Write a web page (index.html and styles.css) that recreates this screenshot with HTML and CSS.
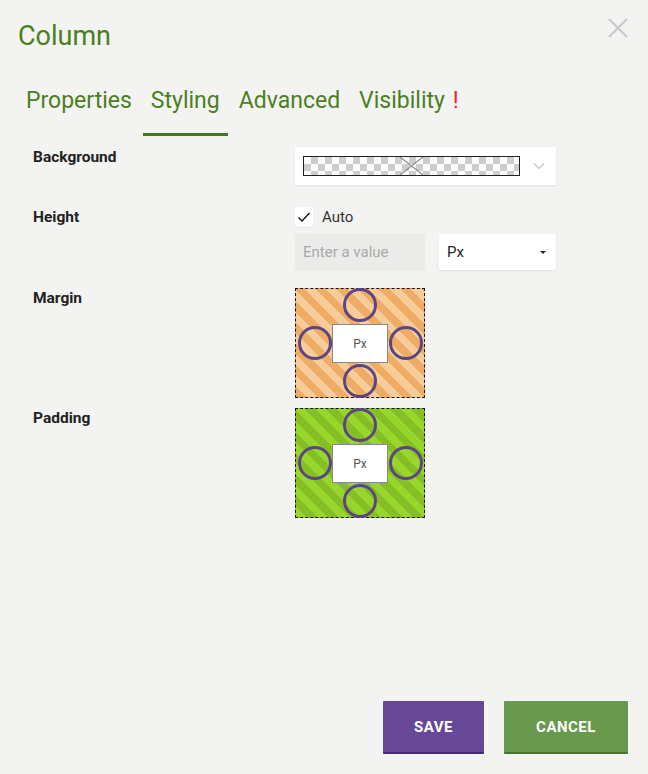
FILE: index.html
```html
<!DOCTYPE html>
<html>
<head>
<meta charset="utf-8">
<link rel="stylesheet" href="styles.css">
</head>
<body>
<div class="dialog">
  <div class="header">
    <h1 class="title">Column</h1>
    <button class="close" aria-label="Close">
      <svg width="20" height="20" viewBox="0 0 20 20"><path d="M1 1L19 19M19 1L1 19" stroke="#c9c9c9" stroke-width="2.2" fill="none"/></svg>
    </button>
  </div>
  <div class="tabs">
    <span class="tab">Properties</span>
    <span class="tab active">Styling</span>
    <span class="tab">Advanced</span>
    <span class="tab">Visibility <span class="warn">!</span></span>
  </div>
  <div class="content">
    <div class="row row-bg">
      <div class="label">Background</div>
      <div class="control">
        <div class="picker">
          <div class="checker">
            <svg width="23" height="18" viewBox="0 0 23 18"><path d="M0 0L23 18M23 0L0 18" stroke="#8f8f8f" stroke-width="1.3" fill="none"/></svg>
          </div>
          <svg class="chev" width="12" height="8" viewBox="0 0 12 8"><path d="M1 1.5L6 6.5L11 1.5" stroke="#c8c8c8" stroke-width="1.4" fill="none"/></svg>
        </div>
      </div>
    </div>
    <div class="row row-height">
      <div class="label">Height</div>
      <div class="control">
        <div class="check-line">
          <span class="checkbox">
            <svg width="14" height="12" viewBox="0 0 14 12"><path d="M1.5 6.5L5 10L12.5 2" stroke="#111" stroke-width="1.4" fill="none"/></svg>
          </span>
          <span class="check-text">Auto</span>
        </div>
        <div class="value-line">
          <input class="value" type="text" placeholder="Enter a value">
          <div class="unit"><span>Px</span><span class="caret"></span></div>
        </div>
      </div>
    </div>
    <div class="row row-margin">
      <div class="label">Margin</div>
      <div class="control">
        <div class="spacing margin">
          <span class="ring top"></span>
          <span class="ring left"></span>
          <span class="mid">Px</span>
          <span class="ring right"></span>
          <span class="ring bottom"></span>
        </div>
      </div>
    </div>
    <div class="row row-padding">
      <div class="label">Padding</div>
      <div class="control">
        <div class="spacing padding">
          <span class="ring top"></span>
          <span class="ring left"></span>
          <span class="mid">Px</span>
          <span class="ring right"></span>
          <span class="ring bottom"></span>
        </div>
      </div>
    </div>
  </div>
  <div class="footer">
    <button class="btn save">SAVE</button>
    <button class="btn cancel">CANCEL</button>
  </div>
</div>
</body>
</html>
```
FILE: styles.css
```css
* { box-sizing: border-box; }
html, body { margin: 0; padding: 0; }
body {
  background: #f3f4f2;
  font-family: Roboto, "Liberation Sans", sans-serif;
  color: #222;
}
.dialog {
  height: 774px;
  display: flex;
  flex-direction: column;
}
.header {
  display: flex;
  justify-content: space-between;
  align-items: flex-start;
  padding: 20px 20px 0 18px;
}
.title {
  margin: 0;
  font-weight: 400;
  font-size: 27px;
  line-height: 32px;
  color: #4b7f1f;
}
.close {
  border: 0;
  background: none;
  padding: 0;
  margin-top: -2px;
  width: 20px;
  height: 20px;
  display: block;
}
.close svg { display: block; }
.tabs {
  display: flex;
  gap: 3px;
  margin-top: 28px;
  padding-left: 18px;
}
.tab {
  font-size: 23px;
  line-height: 28px;
  padding: 7px 8px 18px;
  border-bottom: 3px solid transparent;
  color: #4b7f1f;
}
.tab.active { border-bottom-color: #437a15; }
.warn { color: #e8291f; margin-left: 2px; }
.content {
  padding: 11px 0 0 33px;
}
.row {
  display: flex;
}
.label {
  width: 262px;
  font-size: 15.5px;
  font-weight: 700;
  line-height: 20px;
  color: #222;
}
.row-bg { margin-bottom: 22px; }
.row-height { margin-bottom: 18px; }
.row-margin { margin-bottom: 10px; }
.picker {
  width: 261px;
  height: 38px;
  background: #fff;
  box-shadow: 0 1px 2px rgba(0,0,0,0.08);
  display: flex;
  align-items: center;
  padding-left: 8px;
}
.checker {
  width: 217px;
  height: 20px;
  border: 1px solid #222;
  background: repeating-conic-gradient(#cdcdcd 0 25%, #fff 0 50%) 0 0 / 14px 14px;
  display: flex;
  align-items: center;
  justify-content: center;
}
.checker svg { display: block; }
.chev { margin-left: 13px; display: block; }
.check-line {
  display: flex;
  align-items: center;
  height: 20px;
}
.checkbox {
  width: 18px;
  height: 20px;
  background: #fff;
  box-shadow: 0 1px 1px rgba(0,0,0,0.06);
  display: flex;
  align-items: center;
  justify-content: center;
  border-radius: 2px;
}
.checkbox svg { display: block; }
.check-text {
  margin-left: 9px;
  font-size: 15px;
  color: #333;
}
.value-line {
  display: flex;
  margin-top: 7px;
  gap: 14px;
}
.value {
  width: 130px;
  height: 36px;
  border: 0;
  border-radius: 2px;
  background: #ebecea;
  padding: 0 8px;
  font-family: Roboto, "Liberation Sans", sans-serif;
  font-size: 15px;
  color: #333;
  outline: none;
  box-shadow: 0 1px 1px rgba(0,0,0,0.04);
}
.value::placeholder { color: #a9aaa8; }
.unit {
  width: 117px;
  height: 36px;
  background: #fff;
  border-radius: 2px;
  box-shadow: 0 1px 2px rgba(0,0,0,0.08);
  display: flex;
  align-items: center;
  justify-content: space-between;
  padding: 0 8px;
  font-size: 15px;
  color: #222;
}
.caret {
  width: 0;
  height: 0;
  border-left: 3px solid transparent;
  border-right: 3px solid transparent;
  border-top: 3px solid #222;
  margin-right: 2px;
}
.spacing {
  width: 130px;
  height: 110px;
  border: 1px dashed #111;
  display: grid;
  grid-template-columns: 36px 56px 36px;
  grid-template-rows: 34px 40px 34px;
  grid-template-areas:
    ". top ."
    "left mid right"
    ". bottom .";
}
.margin {
  background: repeating-linear-gradient(45deg, #efac64 0 7.5px, #f6cc9b 7.5px 15px);
}
.padding {
  background: repeating-linear-gradient(45deg, #97d62a 0 7.5px, #86bf25 7.5px 15px);
}
.ring {
  width: 34px;
  height: 34px;
  border: 3.5px solid #5b4684;
  border-radius: 50%;
}
.ring.top { grid-area: top; justify-self: center; align-self: start; margin-top: -1px; }
.ring.bottom { grid-area: bottom; justify-self: center; align-self: end; margin-bottom: -1px; }
.ring.left { grid-area: left; align-self: center; justify-self: end; }
.ring.right { grid-area: right; align-self: center; justify-self: start; margin-left: 1px; }
.mid {
  grid-area: mid;
  background: #fff;
  border: 1px solid #888;
  margin-top: 1px;
  display: flex;
  align-items: center;
  justify-content: center;
  font-size: 12px;
  color: #555;
}
.footer {
  margin-top: auto;
  display: flex;
  justify-content: flex-end;
  gap: 20px;
  padding: 0 20px 22px 0;
}
.btn {
  border: 0;
  height: 51px;
  font-family: Roboto, "Liberation Sans", sans-serif;
  font-weight: 700;
  font-size: 15px;
  letter-spacing: 0.5px;
  color: #fff;
  border-radius: 1px;
}
.save {
  width: 101px;
  background: #674897;
  box-shadow: 0 2px 0 #45296e;
}
.cancel {
  width: 124px;
  background: #68994d;
  box-shadow: 0 2px 0 #4a7233;
}
```
